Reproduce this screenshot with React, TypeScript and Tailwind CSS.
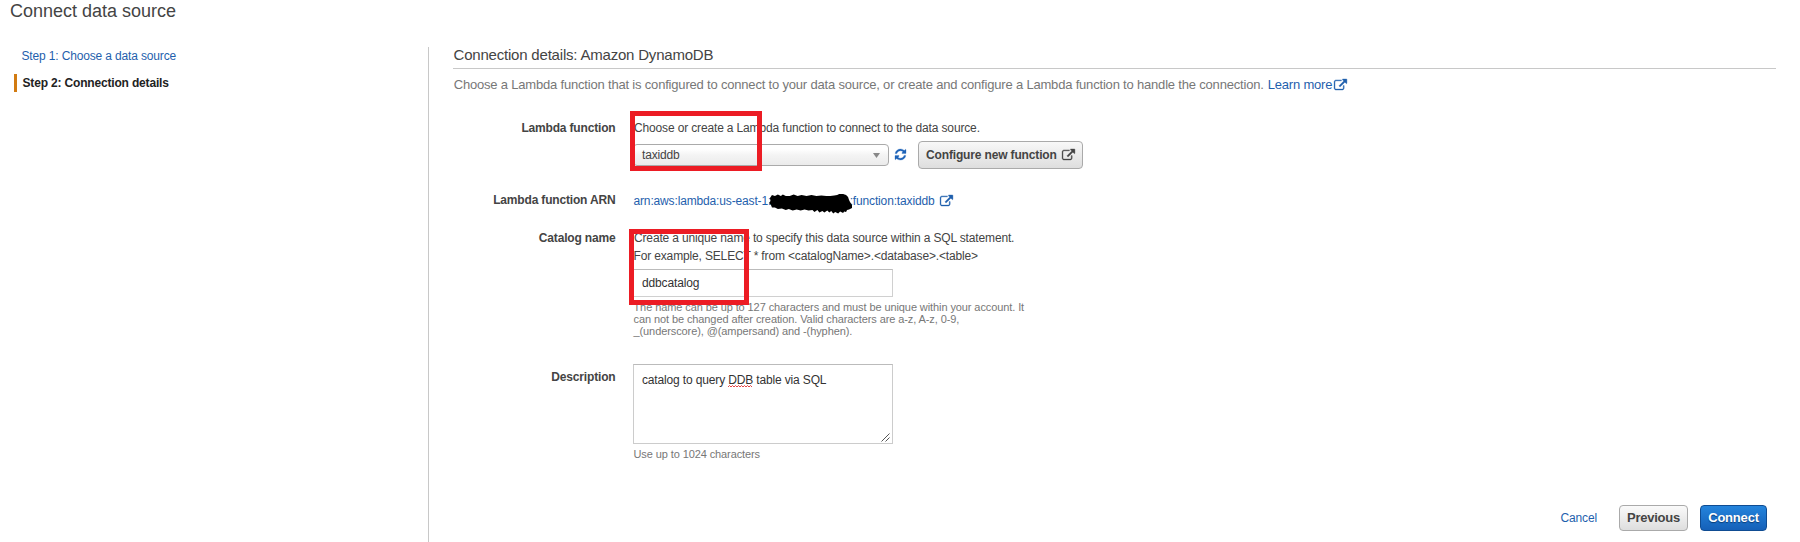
import type { ReactNode } from "react";

const SCRIBBLE =
  "M1 4 L3 1 6 2 9 0.5 12 2 14 0.5 17 2 21 2 25 0.5 29 2 33 1 38 2 43 1 48 2 53 1.5 58 2 62 2 66 1.5 69 1 71 0 75 0 78 1 80 3 81 6 82 8 84 11 84 14 81 15.5 79 16 78 18 76 17.5 75 19 72 17.5 70 19.5 67 18 65 19.500 63 17 61 18.5 59 16.500 56 18.500 54 17 51 18.5 49 16 46 18 44 16 40 16.500 36 15.5 32 16.500 28 15.5 24 16.500 20 15 17 16 13 14.500 9 15 6 13.5 3 13.5 2 11 0 9 1.500 7Z";

function ExternalLink({ className = "" }: { className?: string }) {
  return (
    <svg
      viewBox="0 0 1792 1536"
      fill="currentColor"
      stroke="currentColor"
      strokeWidth="50"
      className={"h-[11px] w-[13px] shrink-0 overflow-visible " + className}
    >
      <path d="M1408 928v320q0 119-84.500 203.500t-203.500 84.500h-832q-119 0-203.500-84.500t-84.500-203.500v-832q0-119 84.500-203.500t203.500-84.500h704q14 0 23 9t9 23v64q0 14-9 23t-23 9h-704q-66 0-113 47t-47 113v832q0 66 47 113t113 47h832q66 0 113-47t47-113v-320q0-14 9-23t23-9h64q14 0 23 9t9 23zm384-864v512q0 26-19 45t-45 19-45-19l-176-176-652 652q-10 10-23 10t-23-10l-114-114q-10-10-10-23t10-23l652-652-176-176q-19-19-19-45t19-45 45-19h512q26 0 45 19t19 45z" />
    </svg>
  );
}

function Refresh() {
  return (
    <svg
      viewBox="128 128 1536 1536"
      fill="currentColor"
      stroke="currentColor"
      strokeWidth="40"
      className="mb-[2px] h-[11px] w-[11px] shrink-0 overflow-visible text-[#1d62b8]"
    >
      <path d="M1639 1056q0 5-1 7-64 268-268 434.500t-478 166.500q-146 0-282.500-55t-243.500-157l-129 129q-19 19-45 19t-45-19-19-45v-448q0-26 19-45t45-19h448q26 0 45 19t19 45-19 45l-137 137q71 66 161 102t187 36q134 0 250-65t186-179q11-17 53-117 8-23 30-23h192q13 0 22.500 9.500t9.500 22.500zm25-800v448q0 26-19 45t-45 19h-448q-26 0-45-19t-19-45 19-45l138-138q-148-137-349-137-134 0-250 65t-186 179q-11 17-53 117-8 23-30 23h-199q-13 0-22.500-9.500t-9.500-22.500v-7q65-268 270-434.500t480-166.500q146 0 284 55.500t245 156.500l130-129q19-19 45-19t45 19 19 45z" />
    </svg>
  );
}

function Row({ label, className, labelClass = "", children }: { label: string; className: string; labelClass?: string; children: ReactNode }) {
  return (
    <div className={"flex " + className}>
      <div className={"mr-[17.500px] w-[162.500px] shrink-0 text-right font-bold tracking-[-0.17px] " + labelClass}>{label}</div>
      <div className="relative">{children}</div>
    </div>
  );
}

export default function App() {
  return (
    <div className="flex h-[542px] w-[1800px] flex-col overflow-hidden bg-white font-['Liberation_Sans',Arial,sans-serif] text-[12px] leading-[18px] tracking-[-0.15px] whitespace-nowrap text-[#444]">
      <h1 className="h-[47px] shrink-0 pl-[10px] text-[18px] leading-[22px] tracking-normal">Connect data source</h1>
      <div className="flex flex-1">
        <nav className="w-[428px] shrink-0">
          <a className="block pl-[21.500px] text-[#1f5fad]">Step 1: Choose a data source</a>
          <div className="mt-[9px] ml-[14px] border-l-[3px] border-[#d27b12] pl-[5.500px] font-bold tracking-[-0.17px] text-[#222]">
            Step 2: Connection details
          </div>
        </nav>
        <main className="flex-1 border-l border-[#c8c8c8] pr-6 pl-6">
          <h2 className="border-b border-[#c8c8c8] pb-[5px] pl-[0.500px] text-[15px] leading-[16px] tracking-[-0.2px]">
            Connection details: Amazon DynamoDB
          </h2>
          <p className="mt-[7px] flex items-center pl-[0.700px] text-[13px] tracking-[-0.188px] text-[#777]">
            Choose a Lambda function that is configured to connect to your data source, or create and configure a Lambda
            function to handle the connection.
            <a className="ml-[4px] flex items-center text-[#1f5fad]">
              Learn more
              <ExternalLink className="mb-[2px] ml-[2px]" />
            </a>
          </p>

          <Row label="Lambda function" className="mt-[25px]">
            <p className="pl-px">Choose or create a Lambda function to connect to the data source.</p>
            <div className="mt-1 flex h-7 items-center">
              <div className="flex h-[22px] w-[256px] items-center justify-between rounded-[4px] border border-[#aaa] bg-linear-to-b from-white from-20% via-[#f4f4f4] via-50% to-[#ebebeb] pr-2 pl-2">
                taxiddb
                <svg viewBox="0 0 7 5" className="h-[5px] w-[7px] fill-[#888]">
                  <path d="M0 0h7L3.500 5z" />
                </svg>
              </div>
              <span className="ml-[6px] flex">
                <Refresh />
              </span>
              <button className="ml-3 flex h-7 w-[165px] items-center rounded-[4px] border border-[#aaa] bg-linear-to-b from-[#f8f8f8] to-[#dedede] pb-px pl-[7px] font-bold">
                Configure new function
                <ExternalLink className="ml-[5px]" />
              </button>
            </div>
            <div className="absolute top-[-8px] left-[-3px] h-[60px] w-[132px] border-[5px] border-[#ec1c24]" />
          </Row>

          <Row label="Lambda function ARN" className="mt-[22px]">
            <div className="flex h-[19px] items-center pt-px pl-[0.500px] text-[#1f5fad]">
              arn:aws:lambda:us-east-1:
              <span className="relative h-[18px] w-[78.500px]">
                <svg viewBox="0 0 84 20" className="absolute top-[2px] left-[-2px] h-5 w-[83px]">
                  <path d={SCRIBBLE} fill="#000" />
                </svg>
              </span>
              :function:taxiddb
              <ExternalLink className="mb-[2px] ml-[5px]" />
            </div>
          </Row>

          <Row label="Catalog name" className="mt-[19px]">
            <p className="pl-px">Create a unique name to specify this data source within a SQL statement.</p>
            <p className="pl-[0.500px]">For example, SELECT * from &lt;catalogName&gt;.&lt;database&gt;.&lt;table&gt;</p>
            <div className="mt-1 flex h-7 w-[260px] items-center border border-[#d0d0d0] border-t-[#bbb] pl-2 text-[#333]">ddbcatalog</div>
            <p className="mt-1 pl-[0.500px] text-[11px] leading-[12px] tracking-[-0.095px] text-[#777]">
              The name can be up to 127 characters and must be unique within your account. It
              <br />
              can not be changed after creation. Valid characters are a-z, A-z, 0-9,
              <br />
              _(underscore), @(ampersand) and -(hyphen).
            </p>
            <div className="absolute top-0 left-[-4px] h-[76px] w-[120px] border-[5px] border-[#ec1c24]" />
          </Row>

          <Row label="Description" className="mt-[27px]" labelClass="pt-1">
            <div className="relative h-20 w-[260px] border border-[#ccc] border-t-[#bbb] pt-[6px] pl-2 text-[#333]">
              catalog to query{" "}
              <span className="relative inline-block">
                DDB
                <svg viewBox="0 0 24 3" className="absolute bottom-px left-0 h-[3px] w-6" fill="none" stroke="#e03030" strokeWidth="0.9">
                  <path d="M0 2l1.500-1.500 1.500 1.500 1.500-1.500 1.500 1.500 1.500-1.500 1.500 1.500 1.500-1.500 1.500 1.500 1.500-1.500 1.500 1.500 1.500-1.500 1.500 1.500 1.500-1.500 1.500 1.500 1.500-1.500 1.500 1.500" />
                </svg>
              </span>{" "}
              table via SQL
              <svg viewBox="0 0 9 9" className="absolute right-[2px] bottom-px h-[9px] w-[9px]" stroke="#555" fill="none">
                <path d="M0.500 8.500l8-8M4.500 8.500l4-4" />
              </svg>
            </div>
            <p className="mt-1 pl-[0.500px] text-[11px] leading-[12px] tracking-[-0.1px] text-[#777]">Use up to 1024 characters</p>
          </Row>

          <div className="mt-[45px] flex h-[26px] items-center justify-end pr-[9px]">
            <a className="mr-[22px] pb-px text-[#1f5fad]">Cancel</a>
            <button className="mr-3 h-[26px] w-[69px] rounded-[4px] border border-[#aaa] bg-linear-to-b from-[#fafafa] to-[#dedede] text-[13px] leading-[24px] font-bold tracking-[-0.25px]">
              Previous
            </button>
            <button className="h-[26px] w-[67px] rounded-[4px] border border-[#0f4c92] bg-linear-to-b from-[#2484dc] to-[#1560b8] text-[13px] leading-[24px] font-bold tracking-[-0.2px] text-white [text-shadow:0_1px_1px_#0b3c75]">
              Connect
            </button>
          </div>
        </main>
      </div>
    </div>
  );
}
